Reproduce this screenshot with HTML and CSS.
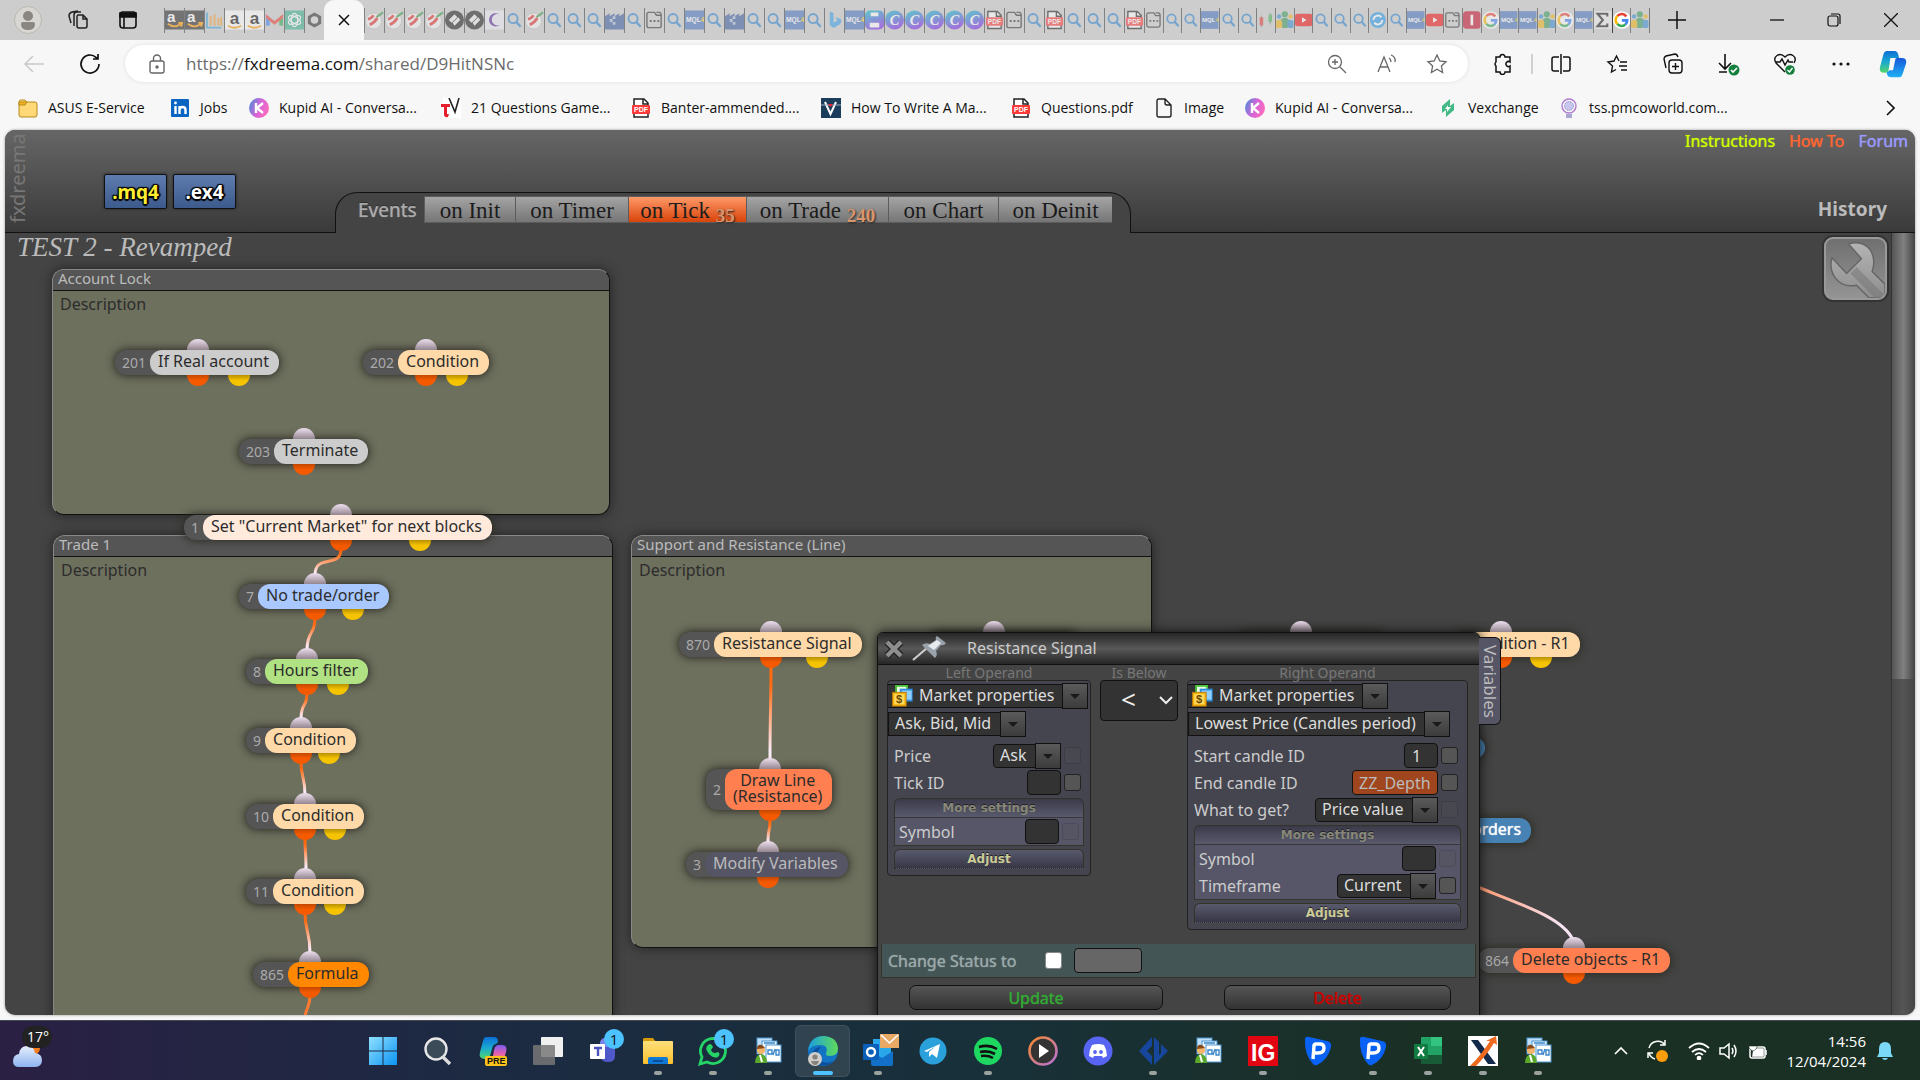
FILE: index.html
```html
<!DOCTYPE html>
<html lang="en">
<head>
    <meta charset="UTF-8">
    <meta name="viewport" content="width=device-width, initial-scale=1.0">
    <title>fxDreema</title>
    <link rel="stylesheet" href="styles.css">
</head>
<body>
    <!-- Icon sprite -->
    <svg class="sprite" aria-hidden="true">
        <defs>
            <linearGradient id="g-link" x1="0" y1="0" x2="0" y2="1"><stop offset="0.2" stop-color="#ff6a10"/><stop offset="0.9" stop-color="#fbeaf6"/></linearGradient>
            <linearGradient id="g-link-wide" x1="0" y1="0" x2="1" y2="0"><stop offset="0" stop-color="#ff9468"/><stop offset="0.9" stop-color="#f8e6f6"/></linearGradient>
            <linearGradient id="g-canva" x1="0" y1="0" x2="0.4" y2="1"><stop offset="0" stop-color="#00c4cc"/><stop offset="1" stop-color="#7d2ae8"/></linearGradient>
            <linearGradient id="g-kupid" x1="0" y1="0" x2="1" y2="0.4"><stop offset="0" stop-color="#3f8fd8"/><stop offset="0.6" stop-color="#d765d8"/><stop offset="1" stop-color="#f76bc0"/></linearGradient>
            <linearGradient id="g-win" x1="0" y1="0" x2="1" y2="1"><stop offset="0" stop-color="#8fe1ff"/><stop offset="1" stop-color="#0c93f2"/></linearGradient>
            <linearGradient id="g-cop1" x1="0" y1="0" x2="0" y2="1"><stop offset="0" stop-color="#0d6fd6"/><stop offset="0.5" stop-color="#19a9d0"/><stop offset="1" stop-color="#52d66a"/></linearGradient>
            <linearGradient id="g-cop2" x1="0" y1="0" x2="0" y2="1"><stop offset="0" stop-color="#1756d8"/><stop offset="1" stop-color="#1fb0f4"/></linearGradient>
            <linearGradient id="g-cop3" x1="0" y1="0" x2="0" y2="1"><stop offset="0" stop-color="#7a5cf0"/><stop offset="0.5" stop-color="#e35fb0"/><stop offset="1" stop-color="#fba05a"/></linearGradient>
            <linearGradient id="g-folder" x1="0" y1="0" x2="0" y2="1"><stop offset="0" stop-color="#ffe07a"/><stop offset="1" stop-color="#fbbf2d"/></linearGradient>
            <linearGradient id="g-edge" x1="0" y1="0" x2="1" y2="0"><stop offset="0" stop-color="#1a9de0"/><stop offset="1" stop-color="#5fdb5a"/></linearGradient>
            <linearGradient id="g-cloud" x1="0" y1="0" x2="0" y2="1"><stop offset="0" stop-color="#e6eefc"/><stop offset="1" stop-color="#8db4ef"/></linearGradient>
            <linearGradient id="g-play" x1="0" y1="0" x2="1" y2="1"><stop offset="0" stop-color="#f58a2c"/><stop offset="1" stop-color="#b672d8"/></linearGradient>
            <linearGradient id="g-wrench" x1="0" y1="0" x2="0" y2="1"><stop offset="0" stop-color="#b4b4b4"/><stop offset="1" stop-color="#8e8e8e"/></linearGradient>
        </defs>

        <symbol id="i-amazon" viewBox="0 0 20 20"><rect width="20" height="20" fill="#2a2a2a"/><text x="2" y="12" font-family="Liberation Sans" font-weight="bold" font-size="16" fill="#fff">a</text><path d="M3 14c5 4 10 3 14 0M14 13l4 0-1 4" stroke="#f90" stroke-width="2" fill="none"/></symbol>
        <symbol id="i-amazon-w" viewBox="0 0 20 20"><rect width="20" height="20" fill="#fff"/><text x="5" y="14" font-family="Liberation Sans" font-weight="bold" font-size="18" fill="#111">a</text><path d="M3 16c5 3 9 3 14 0" stroke="#f90" stroke-width="2" fill="none"/></symbol>
        <symbol id="i-chart" viewBox="0 0 20 20"><path d="M2 2v16h15" stroke="#3aa0d8" stroke-width="2" fill="none"/><path d="M6 6v10M10 4v12M14 8v8M17 7v9" stroke="#f2a03a" stroke-width="2"/></symbol>
        <symbol id="i-gmail" viewBox="0 0 20 20"><path d="M1 4v12h4V8z" fill="#4285f4"/><path d="M19 4v12h-4V8z" fill="#34a853"/><path d="M1 4l9 7 9-7v4l-9 7-9-7z" fill="#ea4335"/></symbol>
        <symbol id="i-gpt" viewBox="0 0 20 20"><rect width="20" height="20" fill="#3fb08e"/><g fill="none" stroke="#fff" stroke-width="1.3"><ellipse cx="10" cy="10" rx="3.4" ry="7"/><ellipse cx="10" cy="10" rx="3.4" ry="7" transform="rotate(60 10 10)"/><ellipse cx="10" cy="10" rx="3.4" ry="7" transform="rotate(120 10 10)"/></g></symbol>
        <symbol id="i-hex" viewBox="0 0 20 20"><path d="M10 2l7 4v8l-7 4-7-4V6z" fill="#333"/><circle cx="10" cy="10" r="4" fill="#d8d8d8"/></symbol>
        <symbol id="i-edm" viewBox="0 0 20 20"><circle cx="9" cy="11" r="8.500" fill="#f4f4f4" stroke="#bbb"/><path d="M5 15q5-2 8-7M3 9q3 0 6-4" stroke="#e0302c" stroke-width="3" fill="none"/><path d="M12 7l7-5" stroke="#3b9a4a" stroke-width="2.400"/></symbol>
        <symbol id="i-dia" viewBox="0 0 20 20"><circle cx="10" cy="10" r="10" fill="#222"/><path d="M4 10l6-6 3 3-6 6zM8 13l6-6 2 3-6 6z" fill="#eee"/></symbol>
        <symbol id="i-moon" viewBox="0 0 20 20"><rect width="20" height="20" fill="#ededf4"/><path d="M15 4a7 7 0 1 0 1 11a6 6 0 1 1-1-11z" fill="#5a2a9c"/></symbol>
        <symbol id="i-search" viewBox="0 0 20 20"><circle cx="8.500" cy="8.500" r="4.800" fill="none" stroke="#2f83d0" stroke-width="2"/><path d="M12 12l4.500 5" stroke="#2f83d0" stroke-width="2.400"/></symbol>
        <symbol id="i-blocks" viewBox="0 0 20 20"><path d="M0 6l5-3v3l5-3v3l5-3v3l5-3v17H0z" fill="#3d5f9f"/><path d="M8 6h3v3H8zM5 9h3v3H5zM8 12h3v3H8z" fill="#fff" opacity=".6"/></symbol>
        <symbol id="i-tab" viewBox="0 0 20 20"><path d="M4 2h6l2 3h5v11q0 2-2 2H4q-2 0-2-2V4q0-2 2-2zM12 2h3q2 0 2 3" fill="none" stroke="#333" stroke-width="1.500"/><path d="M5 11h2M9 11h2M13 11h2" stroke="#333" stroke-width="2"/></symbol>
        <symbol id="i-mql" viewBox="0 0 20 20"><rect width="20" height="20" fill="#4b75bd"/><text x="1" y="12" font-family="Liberation Sans" font-weight="bold" font-size="7" fill="#fff">MQL<tspan fill="#ffd21e">4</tspan></text></symbol>
        <symbol id="i-bing" viewBox="0 0 20 20"><path d="M5 1l4 1.500v10l4-2-2-4 6 3q1 4-3 6l-5 3-4-3z" fill="#3da0e8"/></symbol>
        <symbol id="i-print" viewBox="0 0 20 20"><rect width="20" height="20" rx="5" fill="url(#g-canva)"/><path d="M6 2h8v4H6zM5 13h10v5H5z" fill="#fff"/></symbol>
        <symbol id="i-canva" viewBox="0 0 20 20"><circle cx="10" cy="10" r="10" fill="url(#g-canva)"/><text x="5" y="15" font-family="Liberation Serif" font-style="italic" font-weight="bold" font-size="15" fill="#fff">C</text></symbol>
        <symbol id="i-pdf" viewBox="0 0 20 20"><path d="M3 1h10l4 4v14H3z" fill="#fff" stroke="#222" stroke-width="1.500"/><path d="M12 1v5h5" fill="none" stroke="#222" stroke-width="1.500"/><rect x="1" y="7" width="18" height="9" rx="1" fill="#fb3a3a"/><text x="3" y="14" font-family="Liberation Sans" font-weight="bold" font-size="7" fill="#fff">PDF</text></symbol>
        <symbol id="i-people" viewBox="0 0 20 20"><circle cx="10" cy="3.500" r="3.500" fill="#3a9a5c"/><path d="M5 10q5-5 10 0l-2 9H7z" fill="#3a9a5c"/><circle cx="3.500" cy="6" r="2.500" fill="#3a8fd0"/><circle cx="16.500" cy="6" r="2.500" fill="#f0b51c"/><rect y="10" width="7" height="9" rx="2" fill="#f0b51c"/><rect x="13" y="10" width="7" height="9" rx="2" fill="#3a8fd0"/></symbol>
        <symbol id="i-candle" viewBox="0 0 20 20"><path d="M5 5v13M15 2v13" stroke="#777"/><rect x="3" y="7" width="4" height="9" fill="#e23b3b"/><rect x="13" y="4" width="4" height="8" fill="#4bb05a"/></symbol>
        <symbol id="i-yt" viewBox="0 0 20 20"><rect y="3" width="20" height="14" rx="3" fill="#f01414"/><path d="M8 7l5 3-5 3z" fill="#fff"/></symbol>
        <symbol id="i-sync" viewBox="0 0 20 20"><circle cx="10" cy="10" r="9" fill="#2f9bea"/><path d="M5 10a5 5 0 0 1 9-3M15 10a5 5 0 0 1-9 3" stroke="#fff" stroke-width="2" fill="none"/></symbol>
        <symbol id="i-red" viewBox="0 0 20 20"><rect width="20" height="20" rx="4" fill="#c4122f"/><path d="M10 4v12" stroke="#fff" stroke-width="3"/></symbol>
        <symbol id="i-google" viewBox="0 0 20 20"><circle cx="10" cy="10" r="10" fill="#fff"/><g fill="none" stroke-width="3"><path d="M15 6a6.200 6.200 0 0 0-10-.5" stroke="#ea4335"/><path d="M5 5.500a6 6 0 0 0 0 9" stroke="#fbbc05"/><path d="M5 14.500a6 6 0 0 0 9 .5" stroke="#34a853"/><path d="M10 10.500h6q0 3-2 4.500" stroke="#4285f4"/></g></symbol>
        <symbol id="i-sigma" viewBox="0 0 20 20"><rect width="20" height="20" fill="#eee"/><path d="M15 6V3H4l6 7-6 7h11v-3" fill="none" stroke="#222" stroke-width="2.400"/></symbol>

        <symbol id="i-folder" viewBox="0 0 20 20"><path d="M1 4q0-2 2-2h4l2 2h8q2 0 2 2v11q0 2-2 2H3q-2 0-2-2z" fill="#ffd978" stroke="#b8881a"/><path d="M1 7h6l2-3H1z" fill="#f3b71f" stroke="#b8881a"/></symbol>
        <symbol id="i-linkedin" viewBox="0 0 20 20"><rect x="1" y="1" width="18" height="18" rx="1" fill="#0a66c2"/><path d="M5.500 8v8M9.500 16V8M9.500 12q0-3 3-3t3 3v4" stroke="#fff" stroke-width="2.400" fill="none"/><circle cx="5.500" cy="5" r="1.400" fill="#fff"/></symbol>
        <symbol id="i-kupid" viewBox="0 0 20 20"><circle cx="10" cy="10" r="10" fill="url(#g-kupid)"/><path d="M7 5v10M14 5l-6 5 6 5" fill="none" stroke="#fff" stroke-width="2.400"/></symbol>
        <symbol id="i-tv" viewBox="0 0 20 20"><rect x="2" width="18" height="20" fill="#fff"/><path d="M0 6h9v3H6v7l2 0-1 3q-4 1-4-3V9H0z" fill="#e4202c"/><path d="M8 0l6 14 4-14" fill="none" stroke="#222" stroke-width="1.600"/></symbol>
        <symbol id="i-v" viewBox="0 0 20 20"><rect width="20" height="20" fill="#1c3c5c"/><path d="M4 4l5.500 12L15 4" fill="none" stroke="#fff" stroke-width="2"/><path d="M0 7h20" stroke="#9ab"/><path d="M7 6h5l-2.500 3z" fill="#e23"/></symbol>
        <symbol id="i-page" viewBox="0 0 20 20"><path d="M3 3q0-2 2-2h6l6 6v10q0 2-2 2H5q-2 0-2-2zM11 1v4q0 2 2 2h4" fill="none" stroke="#222" stroke-width="1.400"/></symbol>
        <symbol id="i-vex" viewBox="0 0 20 20"><path d="M12 1L4 8v7l4-3v7l8-7V5l-4 3z" fill="#43b987"/><path d="M10 7l-3 4h2l0 3 4-5h-3z" fill="#fff"/></symbol>
        <symbol id="i-tss" viewBox="0 0 20 20"><circle cx="10" cy="8" r="7" fill="none" stroke="#b07ad0" stroke-width="1.400"/><circle cx="10" cy="8" r="4.500" fill="#c9c6ee" stroke="#7b78c8" stroke-dasharray="1 1"/><path d="M7 17h6M7 19h6" stroke="#5a58a8"/></symbol>

        <symbol id="i-copilot" viewBox="0 0 32 32"><path d="M9 1h9q3 0 4 4l1 4h-5q-3 0-4 4l-3 10q-1 3-5 3-6 0-5-6L5 5q1-4 4-4z" fill="url(#g-cop1)"/><path d="M23 31h-9q-4 0-5-4l0-2q3-1 4-4l3-8q1-4 5-4h5q6 0 5 6l-4 12q-1 4-4 4z" fill="url(#g-cop2)"/><path d="M13 9h6l-3 14h-5z" fill="#f7f7f7"/></symbol>
        <symbol id="i-market" viewBox="0 0 24 24"><rect x="4" width="14" height="14" fill="#4ec23c"/><rect x="6" y="2" width="10" height="10" fill="#eafbe4"/><rect x="9" y="4" width="14" height="14" fill="#2a8fe0"/><rect x="11" y="6" width="11" height="10" fill="#8fd0ff"/><rect x="1" y="8" width="15" height="15" fill="#f7b50f" stroke="#b8780a"/><rect x="3" y="10" width="11" height="11" fill="#ffd95e"/><text x="5" y="20" font-family="Liberation Sans" font-weight="bold" font-size="12" fill="#6b4a00">$</text></symbol>
        <symbol id="i-docs" viewBox="0 0 30 30"><rect x="4" y="2" width="15" height="16" fill="#bfe0f8" stroke="#4f97d0"/><rect x="9" y="5" width="15" height="18" fill="#e8f5ff" stroke="#4f97d0"/><rect x="13" y="9" width="15" height="17" fill="#fff" stroke="#4f97d0"/><path d="M15 14h4v4h-4zM22 13l-2 6M23 14h3v5h-3zM11 7h11" fill="none" stroke="#3b86c8" stroke-width="1.400"/><circle cx="8" cy="14" r="4" fill="#f2b46a"/><path d="M4 13q0-5 5-4l3 3" fill="#8a4a18"/><path d="M2 27q0-8 6-9 6 1 6 9z" fill="#5aa82c"/><path d="M7 19l2 7" stroke="#fff" stroke-width="2"/></symbol>
        <symbol id="i-paypal" viewBox="0 0 30 30"><path d="M2 3q0-3 4-2l18 4q5 1 4 6-3 13-14 18-2 1-4-1Q1 18 2 3z" fill="#0a62f5"/><path d="M10 23l1-13q0-2 2-2h4q4 0 4 4 0 5-6 5h-3" fill="none" stroke="#fff" stroke-width="3.400"/></symbol>
    </svg>

    <!-- Browser tabs -->
    <header class="titlebar">
        <button class="tb-btn" aria-label="Profile"><svg width="28" height="28" viewBox="0 0 28 28"><circle cx="14" cy="14" r="13.500" fill="#d9d7d3" stroke="#bbb8b3"/><circle cx="14" cy="10" r="5" fill="#8a8782"/><path d="M7 18q0-2 2-2h10q2 0 2 2 0 6-7 6t-7-6z" fill="#8a8782"/></svg></button>
        <button class="tb-btn" aria-label="Workspaces"><svg width="22" height="22" viewBox="0 0 22 22" fill="none" stroke="#222" stroke-width="1.500"><path d="M11 6h5l4 4v7q0 2-2 2h-6q-2 0-2-2V8q0-2 1-2zM16 6v4h4M7 17V6q0-3 3-3h4M4 14l-2-7q0-3 3-4l6-1"/></svg></button>
        <button class="tb-btn" aria-label="Tab actions"><svg width="20" height="20" viewBox="0 0 20 20" fill="none" stroke="#111" stroke-width="1.600"><rect x="2" y="2" width="16" height="16" rx="3"/><path d="M6 7v11"/><path d="M2 3h16v4H2z" fill="#111"/></svg></button>
        <nav class="tabs" aria-label="Tabs">
            <div class="tab-group lead">
                <svg class="fav"><use href="#i-amazon"/></svg>
                <svg class="fav"><use href="#i-amazon"/></svg>
                <svg class="fav"><use href="#i-chart"/></svg>
                <svg class="fav"><use href="#i-amazon-w"/></svg>
                <svg class="fav"><use href="#i-amazon-w"/></svg>
                <svg class="fav"><use href="#i-gmail"/></svg>
                <svg class="fav"><use href="#i-gpt"/></svg>
                <svg class="fav"><use href="#i-hex"/></svg>
            </div>
            <button class="tab-active" aria-label="Close tab"><svg width="12" height="12" viewBox="0 0 12 12" stroke="#111" stroke-width="1.500"><path d="M1 1l10 10M11 1L1 11"/></svg></button>
            <div class="tab-group mid">
                <svg class="fav"><use href="#i-edm"/></svg>
                <svg class="fav"><use href="#i-edm"/></svg>
                <svg class="fav"><use href="#i-edm"/></svg>
                <svg class="fav"><use href="#i-edm"/></svg>
                <svg class="fav"><use href="#i-dia"/></svg>
                <svg class="fav"><use href="#i-dia"/></svg>
                <svg class="fav"><use href="#i-moon"/></svg>
                <svg class="fav"><use href="#i-search"/></svg>
                <svg class="fav"><use href="#i-edm"/></svg>
                <svg class="fav"><use href="#i-search"/></svg>
                <svg class="fav"><use href="#i-search"/></svg>
                <svg class="fav"><use href="#i-search"/></svg>
                <svg class="fav"><use href="#i-blocks"/></svg>
                <svg class="fav"><use href="#i-search"/></svg>
                <svg class="fav"><use href="#i-tab"/></svg>
                <svg class="fav"><use href="#i-search"/></svg>
                <svg class="fav"><use href="#i-mql"/></svg>
                <svg class="fav"><use href="#i-search"/></svg>
                <svg class="fav"><use href="#i-blocks"/></svg>
                <svg class="fav"><use href="#i-search"/></svg>
                <svg class="fav"><use href="#i-search"/></svg>
                <svg class="fav"><use href="#i-mql"/></svg>
                <svg class="fav"><use href="#i-search"/></svg>
                <svg class="fav"><use href="#i-bing"/></svg>
                <svg class="fav"><use href="#i-mql"/></svg>
                <svg class="fav"><use href="#i-print"/></svg>
                <svg class="fav"><use href="#i-canva"/></svg>
                <svg class="fav"><use href="#i-canva"/></svg>
                <svg class="fav"><use href="#i-canva"/></svg>
                <svg class="fav"><use href="#i-canva"/></svg>
                <svg class="fav"><use href="#i-canva"/></svg>
                <svg class="fav"><use href="#i-pdf"/></svg>
                <svg class="fav"><use href="#i-tab"/></svg>
                <svg class="fav"><use href="#i-search"/></svg>
                <svg class="fav"><use href="#i-pdf"/></svg>
                <svg class="fav"><use href="#i-search"/></svg>
                <svg class="fav"><use href="#i-search"/></svg>
                <svg class="fav"><use href="#i-search"/></svg>
                <svg class="fav"><use href="#i-pdf"/></svg>
            </div>
            <div class="tab-group tail">
                <svg class="fav"><use href="#i-tab"/></svg>
                <svg class="fav"><use href="#i-search"/></svg>
                <svg class="fav"><use href="#i-search"/></svg>
                <svg class="fav"><use href="#i-mql"/></svg>
                <svg class="fav"><use href="#i-search"/></svg>
                <svg class="fav"><use href="#i-search"/></svg>
                <svg class="fav"><use href="#i-candle"/></svg>
                <svg class="fav"><use href="#i-people"/></svg>
                <svg class="fav"><use href="#i-yt"/></svg>
                <svg class="fav"><use href="#i-search"/></svg>
                <svg class="fav"><use href="#i-search"/></svg>
                <svg class="fav"><use href="#i-search"/></svg>
                <svg class="fav"><use href="#i-sync"/></svg>
                <svg class="fav"><use href="#i-search"/></svg>
                <svg class="fav"><use href="#i-mql"/></svg>
                <svg class="fav"><use href="#i-yt"/></svg>
                <svg class="fav"><use href="#i-tab"/></svg>
                <svg class="fav"><use href="#i-red"/></svg>
                <svg class="fav"><use href="#i-google"/></svg>
                <svg class="fav"><use href="#i-mql"/></svg>
                <svg class="fav"><use href="#i-mql"/></svg>
                <svg class="fav"><use href="#i-people"/></svg>
                <svg class="fav"><use href="#i-google"/></svg>
                <svg class="fav"><use href="#i-mql"/></svg>
                <svg class="fav"><use href="#i-sigma"/></svg>
                <svg class="fav loaded"><use href="#i-google"/></svg>
                <svg class="fav"><use href="#i-people"/></svg>
            </div>
            <button class="tb-btn" aria-label="New tab"><svg width="18" height="18" viewBox="0 0 18 18" stroke="#111" stroke-width="1.500"><path d="M9 0v18M0 9h18"/></svg></button>
        </nav>
        <div class="win-controls">
            <button class="tb-btn" aria-label="Minimize"><svg width="14" height="14" viewBox="0 0 14 14" stroke="#111" stroke-width="1.300"><path d="M0 7h14"/></svg></button>
            <button class="tb-btn" aria-label="Restore"><svg width="14" height="14" viewBox="0 0 14 14" stroke="#111" fill="none" stroke-width="1.200"><rect x="1" y="3" width="10" height="10" rx="2"/><path d="M4 1h7q2 0 2 2v8"/></svg></button>
            <button class="tb-btn" aria-label="Close"><svg width="14" height="14" viewBox="0 0 14 14" stroke="#111" stroke-width="1.300"><path d="M0 0l14 14M14 0L0 14"/></svg></button>
        </div>
    </header>

    <!-- Address bar -->
    <div class="toolbar">
        <button class="tb-btn" aria-label="Back"><svg width="20" height="18" viewBox="0 0 20 18" fill="none" stroke="#c8c8c8" stroke-width="1.500"><path d="M9 1L1 9l8 8M1 9h19"/></svg></button>
        <button class="tb-btn" aria-label="Refresh"><svg width="22" height="22" viewBox="0 0 22 22" fill="none" stroke="#111" stroke-width="1.700"><path d="M20 11a9 9 0 1 1-3-6.700l2 1.700M19 1v5h-5"/></svg></button>
        <div class="address">
            <svg width="16" height="20" viewBox="0 0 16 20" fill="none" stroke="#666" stroke-width="1.400"><rect x="1" y="7" width="14" height="12" rx="2"/><path d="M4.500 7V4.500a3.500 3.500 0 0 1 7 0V7"/><circle cx="8" cy="13" r="1" fill="#666"/></svg>
            <span class="url">https://<b>fxdreema.com</b>/shared/D9HitNSNc</span>
            <button class="addr-btn" aria-label="Zoom"><svg width="20" height="20" viewBox="0 0 20 20" fill="none" stroke="#666" stroke-width="1.300"><circle cx="8" cy="8" r="6.500"/><path d="M13 13l6 6M8 5v6M5 8h6"/></svg></button>
            <button class="addr-btn" aria-label="Read aloud"><svg width="20" height="20" viewBox="0 0 20 20" fill="none" stroke="#666" stroke-width="1.300"><path d="M1 18L7 3l6 15M3 13h8M12 4q2 1 2 4M14 1q5 2 4 7"/></svg></button>
            <button class="addr-btn" aria-label="Favorite"><svg width="22" height="22" viewBox="0 0 22 22" fill="none" stroke="#666" stroke-width="1.300"><path d="M11 2l2.800 6 6.200.8-4.600 4.300 1.200 6.400-5.600-3.200-5.600 3.200 1.200-6.400L2 8.800 8.200 8z"/></svg></button>
        </div>
        <button class="tb-btn ext" aria-label="Extensions"><svg width="22" height="22" viewBox="0 0 22 22" fill="none" stroke="#111" stroke-width="1.500"><path d="M8 4a2.500 2.500 0 0 1 5 0h5v5a2.500 2.500 0 1 0 0 4v6h-5a2.500 2.500 0 0 1-5 0H4v-6a2.500 2.500 0 0 1 0-4V4z"/></svg></button>
        <span class="tb-sep"></span>
        <button class="tb-btn" aria-label="Split screen"><svg width="20" height="20" viewBox="0 0 20 20" fill="none" stroke="#111" stroke-width="1.500"><path d="M8 3H3Q1 3 1 5v10q0 2 2 2h5M12 3h5q2 0 2 2v10q0 2-2 2h-5M10 0v20"/></svg></button>
        <button class="tb-btn" aria-label="Favorites"><svg width="22" height="20" viewBox="0 0 22 20" fill="none" stroke="#111" stroke-width="1.400"><path d="M13 7l-2.500-5L8 7l-6 1 4.500 4-1 6 4.500-2.500M14 8h7M13 12h8M15 16h6"/></svg></button>
        <button class="tb-btn" aria-label="Collections"><svg width="22" height="22" viewBox="0 0 22 22" fill="none" stroke="#111" stroke-width="1.400"><rect x="7" y="7" width="13" height="13" rx="3"/><path d="M13.500 10v7M10 13.500h7M4 15l-2-9q0-2 2-3l9-2q2 0 3 3"/></svg></button>
        <button class="tb-btn" aria-label="Downloads"><svg width="24" height="24" viewBox="0 0 24 24" fill="none" stroke="#111" stroke-width="1.600"><path d="M8 2v14M2 11l6 6 6-6M2 20h8"/><circle cx="17" cy="18" r="5.500" fill="#15803d" stroke="none"/><path d="M14 18l2 2 4-4" stroke="#fff"/></svg></button>
        <button class="tb-btn" aria-label="Browser essentials"><svg width="24" height="24" viewBox="0 0 24 24" fill="none" stroke="#111" stroke-width="1.400"><path d="M12 20L3 11Q0 6 4 3.500 8 1 12 5q4-4 8-1.500Q24 6 21 11M3 10h4l2-3 3 6 3-5 1 2h4"/><circle cx="17" cy="18" r="4.800" fill="#15803d" stroke="none"/><path d="M14.500 18l2 2 3-4" stroke="#fff"/></svg></button>
        <button class="tb-btn" aria-label="Settings"><svg width="18" height="4" viewBox="0 0 18 4" fill="#111"><circle cx="2" cy="2" r="1.600"/><circle cx="9" cy="2" r="1.600"/><circle cx="16" cy="2" r="1.600"/></svg></button>
        <button class="tb-btn copilot" aria-label="Copilot"><svg width="30" height="28"><use href="#i-copilot"/></svg></button>
    </div>

    <!-- Bookmarks -->
    <nav class="bookmarks" aria-label="Favorites bar">
        <a href="#"><svg><use href="#i-folder"/></svg>ASUS E-Service</a>
        <a href="#"><svg><use href="#i-linkedin"/></svg>Jobs</a>
        <a href="#"><svg><use href="#i-kupid"/></svg>Kupid AI - Conversa...</a>
        <a href="#"><svg><use href="#i-tv"/></svg>21 Questions Game...</a>
        <a href="#"><svg><use href="#i-pdf"/></svg>Banter-ammended....</a>
        <a href="#"><svg><use href="#i-v"/></svg>How To Write A Ma...</a>
        <a href="#"><svg><use href="#i-pdf"/></svg>Questions.pdf</a>
        <a href="#"><svg><use href="#i-page"/></svg>Image</a>
        <a href="#"><svg><use href="#i-kupid"/></svg>Kupid AI - Conversa...</a>
        <a href="#"><svg><use href="#i-vex"/></svg>Vexchange</a>
        <a href="#"><svg><use href="#i-tss"/></svg>tss.pmcoworld.com...</a>
        <button class="tb-btn" aria-label="More favorites"><svg width="9" height="16" viewBox="0 0 9 16" fill="none" stroke="#111" stroke-width="1.600"><path d="M1 1l7 7-7 7"/></svg></button>
    </nav>

    <!-- Page -->
    <main class="app">
        <div class="app-head">
            <div class="brand">fxdreema</div>
            <div class="downloads">
                <button class="dl mq">.mq4</button>
                <button class="dl">.ex4</button>
            </div>
            <div class="events">
                <span class="events-title">Events</span>
                <button>on Init</button>
                <button>on Timer</button>
                <button class="on">on Tick <sub>35</sub></button>
                <button>on Trade <sub>240</sub></button>
                <button>on Chart</button>
                <button>on Deinit</button>
            </div>
            <div class="head-right">
                <nav class="help">
                    <a class="help-ins" href="#">Instructions</a>
                    <a class="help-how" href="#">How To</a>
                    <a class="help-forum" href="#">Forum</a>
                </nav>
                <button class="history">History</button>
            </div>
        </div>

        <div class="workspace">
            <div class="canvas">
                <h1>TEST 2 - Revamped</h1>

                <section class="group" id="group-lock"><h2>Account Lock</h2><p>Description</p></section>
                <section class="group" id="group-trade"><h2>Trade 1</h2><p>Description</p></section>
                <section class="group" id="group-sr"><h2>Support and Resistance (Line)</h2><p>Description</p></section>

                <svg class="links" fill="none" stroke-width="3">
                    <g stroke="url(#g-link)">
                        <path d="M336 316c0 20-26 4-26 26"/>
                        <path d="M310 385c0 18-8 12-8 32"/>
                        <path d="M302 460c0 16-6 8-6 26"/>
                        <path d="M296 529c0 16 4 14 4 33"/>
                        <path d="M300 605c0 14 1 14 1 32"/>
                        <path d="M300 680c0 18 5 18 5 40"/>
                        <path d="M766 433c0 40-1 50-1 94"/>
                        <path d="M765 587c0 14-2 6-2 23"/>
                    </g>
                    <path stroke="#ff7a30" d="M305 763c0 10-3 10-5 20"/>
                    <path stroke="url(#g-link-wide)" d="M1470 653c50 20 88 32 98 54"/>
                </svg>

                <div class="node grey" id="node-201"><i class="in"></i><i class="out"></i><i class="alt"></i><span>201</span><b>If Real account</b></div>
                <div class="node peach" id="node-202"><i class="in"></i><i class="out"></i><i class="alt"></i><span>202</span><b>Condition</b></div>
                <div class="node grey" id="node-203"><i class="in"></i><i class="out"></i><span>203</span><b>Terminate</b></div>
                <div class="node cream" id="node-1"><i class="in"></i><i class="out"></i><i class="alt"></i><span>1</span><b>Set "Current Market" for next blocks</b></div>
                <div class="node blue" id="node-7"><i class="in"></i><i class="out"></i><i class="alt"></i><span>7</span><b>No trade/order</b></div>
                <div class="node green" id="node-8"><i class="in"></i><i class="out"></i><i class="alt"></i><span>8</span><b>Hours filter</b></div>
                <div class="node peach" id="node-9"><i class="in"></i><i class="out"></i><i class="alt"></i><span>9</span><b>Condition</b></div>
                <div class="node peach" id="node-10"><i class="in"></i><i class="out"></i><i class="alt"></i><span>10</span><b>Condition</b></div>
                <div class="node peach" id="node-11"><i class="in"></i><i class="out"></i><i class="alt"></i><span>11</span><b>Condition</b></div>
                <div class="node orange" id="node-865"><i class="in"></i><i class="out"></i><span>865</span><b>Formula</b></div>
                <div class="node peach" id="node-870"><i class="in"></i><i class="out"></i><i class="alt"></i><span>870</span><b>Resistance Signal</b></div>
                <div class="node coral" id="node-2"><i class="in"></i><i class="out"></i><span>2</span><b>Draw Line<br>(Resistance)</b></div>
                <div class="node slate" id="node-3"><i class="in"></i><i class="out"></i><span>3</span><b>Modify Variables</b></div>
                <div class="node peach" id="node-a"><i class="in"></i></div>
                <div class="node peach" id="node-b"><i class="in"></i></div>
                <div class="node peach" id="node-r1"><i class="in"></i><i class="out"></i><i class="alt"></i><b>Condition - R1</b></div>
                <div class="node steel" id="node-c"></div>
                <div class="node steel" id="node-orders"><b>orders</b></div>
                <div class="node coral" id="node-864"><i class="in"></i><i class="out"></i><span>864</span><b>Delete objects - R1</b></div>

                <button class="tools" aria-label="Settings">
                    <svg viewBox="0 0 60 60"><path d="M23 5q14-4 22 6 6 10 2 22l13 13v14H44L31 47q-14 3-22-8-6-9-3-20l15 16 15-15z" fill="url(#g-wrench)" stroke="#666" stroke-width="1.500"/><path d="M28 32l28 28" stroke="#757575" stroke-width="9" opacity=".5"/></svg>
                </button>

                <!-- Block settings window -->
                <div class="popup">
                    <div class="popup-head">
                        <button class="icon-btn" aria-label="Close"><svg width="20" height="20" viewBox="0 0 20 20"><path d="M3 3l14 14M17 3L3 17" stroke="#222" stroke-width="7"/><path d="M3 3l14 14M17 3L3 17" stroke="#8e8e8e" stroke-width="4.500"/></svg></button>
                        <button class="icon-btn" aria-label="Pin"><svg width="34" height="26" viewBox="0 0 34 26"><path d="M1 24l14-12" stroke="#ccc" stroke-width="2.200"/><path d="M10 9q4-3 8-1l6-4q-1-3 1-4l9 7q-2 3-5 2l-5 6q2 4-1 7z" fill="#9aa3ab"/><path d="M16 10l9-6 4 3-7 7z" fill="#e6ebef"/></svg></button>
                        <h3>Resistance Signal</h3>
                    </div>
                    <div class="operands">
                        <div class="operand left">
                            <h4>Left Operand</h4>
                            <div class="panel">
                                <div class="combo market"><svg><use href="#i-market"/></svg><select aria-label="Left operand source"><option>Market properties</option></select><i></i></div>
                                <div class="combo"><select aria-label="Left operand type"><option>Ask, Bid, Mid</option></select><i></i></div>
                                <div class="fields">
                                    <div class="row"><label for="price">Price</label><div class="combo round"><select id="price"><option>Ask</option></select><i></i></div><input type="checkbox" class="faint" aria-label="Adjust price"></div>
                                    <div class="row"><label for="tick">Tick ID</label><input type="text" id="tick"><input type="checkbox" aria-label="Adjust tick"></div>
                                </div>
                                <button class="bar">More settings</button>
                                <div class="more">
                                    <div class="row"><label for="lsym">Symbol</label><input type="text" id="lsym"><input type="checkbox" class="faint" aria-label="Adjust symbol"></div>
                                </div>
                                <button class="bar adjust">Adjust</button>
                            </div>
                        </div>
                        <div class="operator">
                            <h4><label for="op">Is Below</label></h4>
                            <div class="op-box"><select id="op"><option>&lt;</option></select><svg width="14" height="9" viewBox="0 0 14 9" fill="none" stroke="#eee" stroke-width="2"><path d="M1 1l6 6 6-6"/></svg></div>
                        </div>
                        <div class="operand right">
                            <h4>Right Operand</h4>
                            <div class="panel">
                                <div class="combo market"><svg><use href="#i-market"/></svg><select aria-label="Right operand source"><option>Market properties</option></select><i></i></div>
                                <div class="combo"><select aria-label="Right operand type"><option>Lowest Price (Candles period)</option></select><i></i></div>
                                <div class="fields">
                                    <div class="row"><label for="start">Start candle ID</label><input type="text" id="start" value="1"><input type="checkbox" aria-label="Adjust start"></div>
                                    <div class="row"><label for="end">End candle ID</label><input type="text" class="var" id="end" value="ZZ_Depth"><input type="checkbox" aria-label="Adjust end"></div>
                                    <div class="row"><label for="what">What to get?</label><div class="combo round"><select id="what"><option>Price value</option></select><i></i></div><input type="checkbox" class="faint" aria-label="Adjust value"></div>
                                </div>
                                <button class="bar">More settings</button>
                                <div class="more">
                                    <div class="row"><label for="rsym">Symbol</label><input type="text" id="rsym"><input type="checkbox" class="faint" aria-label="Adjust symbol"></div>
                                    <div class="row"><label for="tf">Timeframe</label><div class="combo round"><select id="tf"><option>Current</option></select><i></i></div><input type="checkbox" aria-label="Adjust timeframe"></div>
                                </div>
                                <button class="bar adjust">Adjust</button>
                            </div>
                        </div>
                    </div>
                    <div class="status">
                        <label for="status">Change Status to</label>
                        <input type="checkbox" id="status">
                        <input type="text" aria-label="New status">
                    </div>
                    <div class="actions">
                        <button class="update">Update</button>
                        <button class="delete">Delete</button>
                    </div>
                    <button class="variables">Variables</button>
                </div>
            </div>
            <div class="scroll"><div class="thumb"></div></div>
        </div>
    </main>

    <!-- Windows taskbar -->
    <footer class="taskbar">
        <div class="weather">
            <svg width="34" height="34" viewBox="0 0 34 34"><circle cx="22" cy="12" r="7" fill="#f77c1c"/><path d="M8 31q-6 0-6-6t6-7q1-8 8-8t8 7q7 1 7 7t-6 7z" fill="url(#g-cloud)"/></svg>
            <span>17°</span>
        </div>
        <div class="apps">
            <button aria-label="Start"><svg viewBox="0 0 30 30"><path d="M1 1h13.500v13.500H1zM15.500 1H29v13.500H15.500zM1 15.500h13.500V29H1zM15.500 15.500H29V29H15.500z" fill="url(#g-win)"/></svg></button>
            <button aria-label="Search"><svg viewBox="0 0 30 30" fill="none"><circle cx="13" cy="13" r="10.500" fill="#3b4b58" stroke="#e8e8e8" stroke-width="2.400"/><path d="M20 21l7 7" stroke="#ddd" stroke-width="3.400"/></svg></button>
            <button aria-label="Copilot"><svg viewBox="0 0 30 30"><path d="M8 1h8q4 0 4 5l-2 2q-3 0-4 5l-2 7q-1 3-5 3-7 0-5-7l3-11q1-4 3-4z" fill="url(#g-cop1)"/><path d="M22 26h-8l2-12q1-5 5-5h3q6 0 4 7l-2 7q-1 3-4 3z" fill="url(#g-cop3)"/><rect x="7" y="20" width="22" height="10" rx="2" fill="#ffc21a"/><text x="9" y="28" font-family="Liberation Sans" font-weight="bold" font-size="9" fill="#111">PRE</text></svg></button>
            <button aria-label="Task view"><svg viewBox="0 0 30 30"><rect x="8" y="1" width="22" height="20" rx="1" fill="#f0f0f0"/><rect y="9" width="22" height="20" rx="1" fill="#777" opacity=".85"/></svg></button>
            <button aria-label="Teams"><svg viewBox="0 0 30 30"><circle cx="17" cy="7" r="5" fill="#7b83eb"/><path d="M12 11h15v9q0 6-7 6t-8-6z" fill="#5059c9"/><rect x="2" y="8" width="15" height="15" rx="1" fill="#fff"/><path d="M6 12h8M10 12v8" stroke="#4b53bc" stroke-width="2.400"/></svg><em>1</em></button>
            <button class="run" aria-label="Explorer"><svg viewBox="0 0 30 30"><path d="M0 3q0-1 2-1h8l3 4h-13z" fill="#d99a0a"/><rect y="5" width="30" height="23" rx="1" fill="url(#g-folder)"/><path d="M5 28v-5q0-2 2-2h16q2 0 2 2v5z" fill="#0f78d4"/><path d="M10 25h10" stroke="#0a4f96" stroke-width="2"/></svg></button>
            <button class="run" aria-label="WhatsApp"><svg viewBox="0 0 30 30"><path d="M2 28l2-7a12.500 12.500 0 1 1 5 5z" fill="none" stroke="#25d366" stroke-width="2.800"/><path d="M10 9q3-3 5 2l-2 3q1 3 4 3l3-1q3 2 0 5-4 2-9-3-5-6-1-9z" fill="#25d366"/></svg><em>1</em></button>
            <button class="run" aria-label="Planner"><svg><use href="#i-docs"/></svg></button>
            <button class="run current" aria-label="Edge"><svg viewBox="0 0 30 30"><circle cx="15" cy="15" r="15" fill="#1272c4"/><path d="M0 15Q2 0 16 0q13 1 14 12 0 8-8 8-5 0-4-3 3-8-6-8T0 15z" fill="url(#g-edge)"/><path d="M13 11q-6 5-1 13 5 5 14 1-6 6-15 4-8-3-7-10 2-8 9-8z" fill="#0b4f9e"/><circle cx="7" cy="23" r="7" fill="#d0cecb"/><circle cx="7" cy="21" r="2.600" fill="#85827d"/><path d="M3 25h8q-1 4-4 4t-4-4z" fill="#85827d"/></svg></button>
            <button class="run" aria-label="Outlook"><svg viewBox="0 0 30 30"><rect x="10" y="3" width="18" height="22" fill="#28a8ea"/><path d="M8 15l11 7 11-7v13q0 2-2 2H10q-2 0-2-2z" fill="#1270c8"/><rect y="8" width="16" height="16" rx="1" fill="#0a5fb8"/><circle cx="8" cy="16" r="4" fill="none" stroke="#fff" stroke-width="2.400"/></svg><svg class="mail" viewBox="0 0 19 14"><rect width="19" height="14" fill="#e8a967"/><path d="M1 1l8.500 8L18 1" fill="none" stroke="#fff" stroke-width="1.600"/></svg></button>
            <button aria-label="Telegram"><svg viewBox="0 0 30 30"><circle cx="15" cy="15" r="13.500" fill="#2ba1dc"/><path d="M6 15l16-7-3 14-5-4-3 3v-5l7-6-9 6z" fill="#fff"/></svg></button>
            <button class="run" aria-label="Spotify"><svg viewBox="0 0 30 30"><circle cx="15" cy="15" r="14" fill="#1ed760"/><path d="M6 11q10-3 18 2M7 16q8-2 15 2M8 20q7-1 12 2" fill="none" stroke="#111" stroke-width="2.600"/></svg></button>
            <button aria-label="Media player"><svg viewBox="0 0 30 30"><circle cx="15" cy="15" r="13.500" fill="#333" stroke="url(#g-play)" stroke-width="2.600"/><path d="M11 8l10 7-10 7z" fill="#fff"/></svg></button>
            <button aria-label="Discord"><svg viewBox="0 0 30 30"><circle cx="15" cy="15" r="14.500" fill="#5865f2"/><path d="M9 9q6-2 12 0 3 5 3 11l-4 2-1-2h-8l-1 2-4-2q0-6 3-11z" fill="#fff"/><circle cx="12" cy="16" r="1.900" fill="#5865f2"/><circle cx="18" cy="16" r="1.900" fill="#5865f2"/></svg></button>
            <button class="run" aria-label="Diamond"><svg viewBox="0 0 30 30" fill="#16479c"><path d="M14 1v9l-5 5 5 5v9L1 15zM16 1l5 5v13l-5 5zM23 8l7 7-14 14v-5l7-7z"/></svg></button>
            <button aria-label="Planner"><svg><use href="#i-docs"/></svg></button>
            <button class="run" aria-label="IG"><svg viewBox="0 0 30 30"><rect width="30" height="30" fill="#e20613"/><text x="3" y="25" font-family="Liberation Sans" font-weight="bold" font-size="23" fill="#fff">IG</text></svg></button>
            <button aria-label="PayPal"><svg><use href="#i-paypal"/></svg></button>
            <button class="run" aria-label="PayPal"><svg><use href="#i-paypal"/></svg></button>
            <button class="run" aria-label="Excel"><svg viewBox="0 0 30 30"><rect x="8" y="1" width="21" height="27" rx="1" fill="#21a366"/><path d="M18 1h11v9H18z" fill="#33c481"/><path d="M8 19h21v9H8z" fill="#185c37"/><rect x="1" y="8" width="14" height="15" rx="1" fill="#107c41"/><path d="M5 11l6 9M11 11l-6 9" stroke="#fff" stroke-width="2"/></svg></button>
            <button class="run" aria-label="Trader"><svg viewBox="0 0 30 30"><rect width="30" height="30" fill="#fff"/><path d="M3 4h7l18 24h-8z" fill="#12294a"/><path d="M2 30Q14 18 22 5l-4 0L28 0l1 9-3-2Q18 20 8 30z" fill="#ee6a1f"/></svg></button>
            <button class="run" aria-label="Planner"><svg><use href="#i-docs"/></svg></button>
        </div>
        <div class="tray">
            <svg width="14" height="9" viewBox="0 0 14 9" fill="none" stroke="#fff" stroke-width="1.700"><path d="M1 8l6-6 6 6"/></svg>
            <svg width="24" height="24" viewBox="0 0 24 24" fill="none" stroke="#fff" stroke-width="1.500"><path d="M3 9a9 9 0 0 1 16-3M19 1v5h-5M9 20a9 9 0 0 1-6-6M2 19v-5h5"/><circle cx="16" cy="17" r="6" fill="#ff9d0a" stroke="none"/></svg>
            <div class="net">
                <svg width="22" height="18" viewBox="0 0 22 18" fill="none" stroke="#fff" stroke-width="1.700"><path d="M1 6q10-9 20 0M4 10q7-6 14 0M7 13q4-4 8 0"/><circle cx="11" cy="16" r="1.500" fill="#fff"/></svg>
                <svg width="20" height="18" viewBox="0 0 20 18" fill="none" stroke="#fff" stroke-width="1.500"><path d="M1 6h4l5-4v14l-5-4H1zM13 6q2 3 0 6M15 3q4 6 0 12"/></svg>
                <svg width="20" height="18" viewBox="0 0 20 18" fill="none" stroke="#fff" stroke-width="1.500"><rect x="2" y="5" width="15" height="11" rx="2"/><path d="M18 8v5"/><path d="M6 7h9v7H5z" fill="#fff"/><path d="M3 0v4M7 0v4M1 4h8v2q-3 3-4 3t-4-3z" fill="#fff" stroke="#1a3024" stroke-width=".6"/></svg>
            </div>
            <div class="clock"><span>14:56</span><span>12/04/2024</span></div>
            <svg width="18" height="20" viewBox="0 0 18 20" fill="#7cd8f8"><path d="M9 1q6 0 6 7v4l2 4H1l2-4V8q0-7 6-7zM6 17h6q-1 2-3 2t-3-2z"/></svg>
        </div>
    </footer>
</body>
</html>
```

FILE: styles.css
```css
* {
    box-sizing: border-box;
}

body {
    margin: 0;
    height: 100vh;
    display: flex;
    flex-direction: column;
    overflow: hidden;
    background: #f7f7f7;
    color: #111;
    font-family: "Segoe UI", "Open Sans", "Noto Sans", sans-serif;
    font-size: 15px;
}

button {
    font: inherit;
    color: inherit;
    padding: 0;
    border: 0;
    background: none;
    cursor: pointer;
}

a {
    color: inherit;
    text-decoration: none;
}

h1, h2, h3, h4, p {
    margin: 0;
    font-weight: normal;
}

.sprite {
    position: absolute;
    width: 0;
    height: 0;
}

/* Browser chrome */
.titlebar {
    display: flex;
    height: 40px;
    padding-left: 3px;
    background: #cdcdcd;
}

.tb-btn {
    display: flex;
    align-items: center;
    justify-content: center;
    flex: none;
    width: 50px;
}

.tabs {
    display: flex;
    flex: 1;
    padding-left: 11px;
}

.tab-group {
    display: flex;
    align-items: center;
    flex: none;
}

.lead {
    width: 160px;
}

.mid {
    width: 780px;
}

.tail {
    width: 506px;
    border-right: 1px solid #777;
    height: 25px;
    margin: 8px 2px 0 0;
}

.fav {
    flex: 1;
    min-width: 0;
    height: 25px;
    padding: 2px 0 3px;
    border-left: 1px solid #444;
    opacity: 0.55;
}

.fav.loaded {
    opacity: 1;
}

.tab-active {
    display: flex;
    align-items: center;
    justify-content: center;
    width: 40px;
    background: #f7f7f7;
    border-radius: 10px 10px 0 0;
}

.win-controls {
    display: flex;
    padding-right: 1px;
}

.win-controls .tb-btn {
    width: 57px;
}

.toolbar {
    display: flex;
    align-items: center;
    height: 47px;
    padding: 0 3px 0 6px;
}

.toolbar .tb-btn {
    width: 56px;
    height: 36px;
}

.toolbar .copilot {
    width: 48px;
}

.address {
    display: flex;
    align-items: center;
    flex: 1;
    height: 37px;
    margin: 0 7px;
    padding: 0 6px 0 24px;
    border-radius: 19px;
    background: #fff;
    box-shadow: 0 0 4px rgba(0, 0, 0, 0.1);
}

.url {
    flex: 1;
    margin-left: 21px;
    font-size: 17px;
    color: #6b6b6b;
}

.url b {
    font-weight: normal;
    color: #111;
}

.addr-btn {
    display: flex;
    justify-content: center;
    width: 50px;
}

.tb-sep {
    width: 2px;
    height: 20px;
    background: #d0d0d0;
}

.bookmarks {
    display: grid;
    grid-template-columns: 152px 79px 192px 190px 190px 190px 143px 91px 193px 121px 1fr 50px;
    align-items: center;
    height: 43px;
    padding: 0 5px 2px 18px;
    font-size: 14px;
    white-space: nowrap;
}

.bookmarks a {
    display: flex;
    align-items: center;
    gap: 10px;
}

.bookmarks a svg {
    width: 20px;
    height: 20px;
}

/* App header */
.app {
    flex: 1;
    min-height: 0;
    display: flex;
    flex-direction: column;
    margin: 0 5px 5px;
    overflow: hidden;
    border-radius: 10px;
    background: #444;
    box-shadow: 0 0 3px rgba(0, 0, 0, 0.4);
    font-family: "Noto Sans", sans-serif;
    font-size: 16px;
}

.app-head {
    display: flex;
    height: 103px;
    border-bottom: 1px solid #111;
    background: linear-gradient(#666, #3a3a3a);
}

.brand {
    width: 26px;
    padding-top: 9px;
    writing-mode: vertical-rl;
    transform: rotate(180deg);
    font-size: 20px;
    line-height: 26px;
    color: #777;
}

.downloads {
    display: flex;
    gap: 6px;
    margin: 44px 0 0 73px;
    width: 231px;
}

.dl {
    width: 63px;
    height: 35px;
    border: 1px solid #111;
    border-radius: 2px;
    background: linear-gradient(#5f7cae, #3c5a8c);
    box-shadow: 0 0 3px #222;
    color: #fff;
    font-size: 19px;
    font-weight: bold;
    line-height: 30px;
    text-shadow: 1px 1px 1px #000, -1px -1px 1px #000, 1px -1px 1px #000, -1px 1px 1px #000, 0 2px 1px #000, 2px 0 1px #000;
}

.mq {
    color: #fe3;
}

.events {
    display: grid;
    grid-template-columns: 66px 91px 113px 118px 142px 110px 114px;
    align-items: center;
    height: 41px;
    margin-top: 62px;
    padding: 0 18px 8px 22px;
    border: 1px solid #111;
    border-bottom: 0;
    border-radius: 22px 22px 0 0;
    background: #444;
    margin-bottom: -1px;
}

.events-title {
    padding-top: 2px;
    color: #aaa;
    font-size: 19px;
    text-shadow: 0 0 1px #aaa, 0 -1px #222;
}

.events button {
    height: 27px;
    padding-top: 4px;
    border: 1px solid #5c5c5c;
    border-right-width: 0;
    background: linear-gradient(#a4a4a4, #767676);
    color: #1c1c1c;
    font-family: Georgia, "Liberation Serif", serif;
    font-size: 23px;
    line-height: 20px;
    white-space: nowrap;
}

.events .on {
    background: linear-gradient(#ff9a68, #d8430a);
}

.events sub {
    color: #d9956c;
    font-size: 19px;
    font-weight: bold;
    line-height: 0;
    vertical-align: -4px;
    text-shadow: 1px 1px 2px #222;
}

.head-right {
    flex: 1;
    display: flex;
    flex-direction: column;
    align-items: flex-end;
    justify-content: space-between;
    padding: 0 7px 10px 0;
}

.help {
    display: flex;
    gap: 14px;
    text-shadow: 0 0 1px currentColor;
}

.help-ins {
    color: #cf0;
}

.help-how {
    color: #f63;
}

.help-forum {
    color: #99f;
}

.history {
    margin-right: 21px;
    color: #bbb;
    font-size: 19px;
    font-weight: bold;
}

/* Diagram */
.workspace {
    flex: 1;
    min-height: 0;
    display: flex;
}

.canvas {
    position: relative;
    flex: 1;
    overflow: hidden;
}

.scroll {
    width: 24px;
    background: linear-gradient(90deg, #484848, #555 50%, #444);
    border-left: 1px solid #333;
}

.thumb {
    height: 57%;
    background: linear-gradient(90deg, #555, #808080 50%, #444);
}

h1 {
    padding: 0 12px;
    color: #bbb;
    font-family: "Monotype Corsiva", "Liberation Serif", cursive;
    font-size: 27px;
    font-style: italic;
    line-height: 28px;
}

.group {
    position: absolute;
    border: 1px solid #111;
    border-top-color: #888;
    border-left-color: #888;
    border-radius: 12px;
    background: #6e705e;
    box-shadow: 0 0 12px #222;
    overflow: hidden;
}

.group h2 {
    padding: 0 0 3px 5px;
    border-bottom: 1px solid #111;
    background: #555;
    color: #bbb;
    font-size: 15px;
    line-height: 17px;
}

.group p {
    padding-left: 7px;
    color: #2c2c2c;
    line-height: 26px;
}

#group-lock { left: 47px; top: 36px; width: 558px; height: 246px; }
#group-trade { left: 48px; top: 302px; width: 560px; height: 520px; }
#group-sr { left: 626px; top: 302px; width: 521px; height: 413px; }

.links {
    position: absolute;
    left: 0;
    top: 0;
    width: 100%;
    height: 100%;
}

.node {
    position: absolute;
    display: flex;
    align-items: stretch;
    min-height: 25px;
    border-radius: 12px;
    background: #555;
    box-shadow: 0 0 8px 1px #2a2a22;
    white-space: nowrap;
}

.node span {
    padding: 3px 4px 0 7px;
    align-self: center;
    color: #aaa;
    font-size: 14px;
    line-height: 16px;
    padding: 0 4px 0 7px;
}

.node b {
    padding: 3px 10px 6px 8px;
    border-radius: 12px;
    font-weight: normal;
    line-height: 16px;
    text-align: center;
    color: #2c2c2c;
}

.node i {
    position: absolute;
    width: 22px;
    height: 11px;
    margin-left: -11px;
}

.node .in {
    left: var(--port);
    bottom: 100%;
    border-radius: 11px 11px 0 0;
    background: linear-gradient(#efe0f0, #94868f);
}

.node .out {
    left: var(--port);
    top: 100%;
    border-radius: 0 0 11px 11px;
    background: linear-gradient(#c34800, #f65a00 50%);
}

.node .alt {
    left: var(--alt);
    top: 100%;
    border-radius: 0 0 11px 11px;
    background: linear-gradient(#b89000, #f5c300 50%);
}

.grey b { background: #ccc; }
.peach b { background: #ffdaa8; }
.cream b { background: #ffeadc; }
.blue b { background: #a9c8ff; }
.green b { background: #b0e182; }
.orange b { background: #ff8800; }
.coral b { background: #ff7f50; }
.slate b { background: #556; color: #bbb; }
.steel b { background: #4682b4; color: #fff; text-shadow: 0 0 1px #fff; }

#node-201 { left: 110px; top: 117px; --port: 83px; --alt: 124px; }
#node-202 { left: 358px; top: 117px; --port: 63px; --alt: 94px; }
#node-203 { left: 234px; top: 206px; --port: 65px; }
#node-1 { left: 179px; top: 282px; --port: 157px; --alt: 236px; }
#node-7 { left: 234px; top: 351px; --port: 76px; --alt: 114px; }
#node-8 { left: 241px; top: 426px; --port: 61px; --alt: 92px; }
#node-9 { left: 241px; top: 495px; --port: 55px; --alt: 83px; }
#node-10 { left: 241px; top: 571px; --port: 59px; --alt: 89px; }
#node-11 { left: 241px; top: 646px; --port: 59px; --alt: 89px; }
#node-865 { left: 248px; top: 729px; --port: 57px; }
#node-870 { left: 674px; top: 399px; --port: 92px; --alt: 138px; }
#node-2 { left: 701px; top: 536px; --port: 64px; }
#node-3 { left: 681px; top: 619px; --port: 82px; }
#node-a { left: 924px; top: 399px; width: 150px; --port: 65px; }
#node-b { left: 1231px; top: 399px; width: 150px; --port: 65px; }
#node-r1 { left: 1451px; top: 399px; --port: 45px; --alt: 85px; }
#node-c { left: 1440px; top: 504px; width: 40px; min-height: 22px; background: #4682b4; }
#node-orders { left: 1459px; top: 585px; }
#node-864 { left: 1473px; top: 715px; --port: 96px; }

.tools {
    position: absolute;
    top: 4px;
    right: 4px;
    width: 63px;
    height: 63px;
    overflow: hidden;
    border: 2px solid #999;
    border-radius: 9px;
    background: linear-gradient(#707070, #949494);
    box-shadow: 0 0 0 2px #333;
}

.tools svg {
    display: block;
    width: 59px;
    height: 59px;
}

/* Settings window */
.popup {
    position: absolute;
    left: 872px;
    top: 399px;
    width: 603px;
    height: 390px;
    border: 1px solid #111;
    border-radius: 6px;
    background: #444;
    box-shadow: 0 0 12px #111;
    color: #ccc;
}

.popup-head {
    display: flex;
    align-items: center;
    gap: 8px;
    height: 32px;
    padding-left: 6px;
    border-bottom: 1px solid #111;
    border-radius: 6px 6px 0 0;
    background: linear-gradient(#262626, #585858 50%, #262626);
}

.popup-head h3 {
    margin-left: 13px;
    padding-bottom: 2px;
    font-size: 16px;
}

.icon-btn svg {
    display: block;
}

.operands {
    display: flex;
    align-items: flex-start;
    height: 279px;
    padding: 0 9px;
}

.popup h4 {
    color: #777;
    font-size: 14px;
    line-height: 15px;
    text-align: center;
}

.left {
    width: 204px;
}

.right {
    width: 281px;
}

.operator {
    width: 78px;
    margin: 0 9px;
}

.op-box {
    display: flex;
    align-items: center;
    height: 41px;
    padding-right: 4px;
    border: 1px solid #111;
    border-radius: 4px;
    background: #333;
}

.popup select {
    appearance: none;
    height: 24px;
    padding: 0 8px 2px 6px;
    border: 1px solid #111;
    border-radius: 0;
    background: #333;
    color: #ddd;
    font: inherit;
    line-height: 20px;
}

.op-box select {
    flex: 1;
    height: 34px;
    border: 0;
    padding: 0 0 3px 20px;
    color: #eee;
    font-size: 26px;
    line-height: 30px;
}

.panel {
    display: flex;
    flex-direction: column;
    padding: 1px 0 6px;
    border: 1px solid #222;
    border-radius: 4px;
    background: #454550;
}

.combo {
    display: flex;
    align-items: center;
    height: 28px;
}

.combo i {
    position: relative;
    width: 26px;
    height: 26px;
    margin-left: -1px;
    border: 1px solid #111;
    background: linear-gradient(#5a5a5a, #3c3c3c);
}

.combo i::after {
    content: "";
    position: absolute;
    left: 7px;
    top: 10px;
    border: 5px solid transparent;
    border-top-color: #1a1a1a;
    border-bottom: 0;
}

.market svg {
    width: 29px;
    height: 24px;
    padding: 0 2px;
    border: 1px solid #111;
    border-width: 1px 0;
    background: #333;
}

.market select {
    padding: 0 7px 2px 2px;
    border-left: 0;
}

.round select {
    border-radius: 4px 0 0 4px;
}

.fields {
    padding: 4px 9px 2px 6px;
}

.row {
    display: flex;
    align-items: center;
    gap: 3px;
    height: 27px;
}

.row label {
    flex: 1;
}

.popup input[type="text"] {
    width: 34px;
    height: 25px;
    padding: 0 7px;
    border: 1px solid #111;
    border-radius: 4px;
    background: #333;
    color: #ddd;
    font: inherit;
}

.popup .row .var {
    width: 86px;
    padding: 0 6px;
    background: #a0461e;
    color: #bbb;
}

.popup input[type="checkbox"] {
    appearance: none;
    width: 17px;
    height: 17px;
    margin: 0;
    border: 1px solid #222;
    border-radius: 3px;
    background: #555;
}

.popup .faint {
    opacity: 0.2;
}

.bar {
    height: 20px;
    margin: 0 6px;
    border: 1px solid #333328;
    border-bottom-style: dotted;
    border-radius: 6px 6px 0 0;
    background: linear-gradient(#3a3a4a, #5a5a6e);
    color: #88887a;
    font-family: "DejaVu Sans", Verdana, sans-serif;
    font-size: 12px;
    font-weight: bold;
    line-height: 17px;
    text-shadow: 0 -1px #222;
}

.adjust {
    margin-top: 3px;
    background: linear-gradient(#5a5a6e, #363646);
    color: #cc9;
}

.more {
    margin: 0 6px;
    padding: 0 4px;
    border: 1px solid #333328;
    border-top: 0;
    background: #565668;
}

.status {
    display: flex;
    align-items: center;
    height: 34px;
    margin: 0 3px;
    padding-left: 6px;
    border: 1px solid #333328;
    border-top: 0;
    background: #455;
    color: #9aa9a9;
}

.status label {
    width: 157px;
    text-shadow: 0 0 1px currentColor;
}

.popup .status input[type="checkbox"] {
    background: #fff;
    border-color: #888;
}

.popup .status input[type="text"] {
    width: 68px;
    margin-left: 12px;
    background: #666;
}

.actions {
    display: flex;
    justify-content: space-between;
    padding: 7px 28px 0 31px;
}

.actions button {
    width: 254px;
    height: 25px;
    border: 1px solid #111;
    border-radius: 7px;
    background: linear-gradient(#555, #333);
    line-height: 22px;
    text-shadow: 0 0 1px currentColor;
}

.actions .delete {
    width: 227px;
    color: #c00;
}

.actions .update {
    color: #3a3;
}

.variables {
    position: absolute;
    left: 100%;
    top: 4px;
    width: 22px;
    height: 88px;
    border: 1px solid #111;
    border-left: 0;
    border-radius: 0 6px 6px 0;
    background: #556;
    color: #bbb;
    font-size: 17px;
    writing-mode: vertical-rl;
    line-height: 20px;
}

/* Taskbar */
.taskbar {
    display: flex;
    align-items: center;
    height: 60px;
    border-top: 1px solid #444a50;
    background: linear-gradient(90deg, #2a2044, #1c2a42 25%, #18303a 50%, #1a3024 75%);
    color: #fff;
}

.weather {
    position: relative;
    width: 355px;
    padding: 4px 0 0 11px;
}

.weather svg {
    display: block;
}

.weather span {
    position: absolute;
    left: 22px;
    top: -6px;
    width: 30px;
    padding: 2px 0 2px 2px;
    border-radius: 11px;
    background: #222;
    font-size: 14px;
    text-align: center;
    line-height: 18px;
}

.apps {
    display: flex;
}

.apps button {
    position: relative;
    display: flex;
    align-items: center;
    justify-content: center;
    width: 55px;
    height: 52px;
}

.apps svg {
    width: 30px;
    height: 30px;
}

.apps .run::after {
    content: "";
    position: absolute;
    bottom: 2px;
    width: 8px;
    height: 4px;
    border-radius: 2px;
    background: #9aa19e;
}

.apps .current {
    border-radius: 6px;
    background: rgba(255, 255, 255, 0.1);
    box-shadow: inset 0 0 0 1px rgba(255, 255, 255, 0.08);
}

.apps .current::after {
    width: 20px;
    background: #4cc2ff;
}

.apps em {
    position: absolute;
    top: 4px;
    right: 6px;
    width: 20px;
    height: 20px;
    border-radius: 50%;
    background: #4cc2ff;
    color: #111;
    font-style: normal;
    line-height: 20px;
}

.apps .mail {
    position: absolute;
    top: 9px;
    right: 6px;
    width: 19px;
    height: 14px;
}

.tray {
    flex: 1;
    display: flex;
    align-items: center;
    justify-content: flex-end;
    gap: 18px;
    padding-right: 26px;
}

.net {
    display: flex;
    gap: 9px;
}

.clock {
    display: flex;
    flex-direction: column;
    text-align: right;
    font-size: 15px;
    line-height: 20px;
    margin-right: -8px;
}
```
